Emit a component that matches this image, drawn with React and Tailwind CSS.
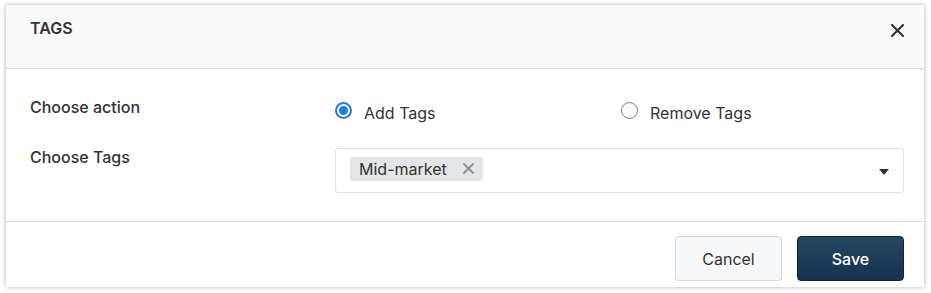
import { useState } from 'react';

function Radio({ checked, label, onClick }) {
     return (
          <button type="button" onClick={onClick} className="flex items-center gap-3 text-left">
               {checked ? (
                    <span className="w-[17px] h-[17px] rounded-full border-2 border-[#1e7bf0] flex items-center justify-center bg-white">
                         <span className="w-[9px] h-[9px] rounded-full bg-[#1e7bf0]"></span>
                    </span>
               ) : (
                    <span className="w-[17px] h-[17px] rounded-full border border-[#7a7a7a] bg-white"></span>
               )}
               <span className="text-[16px] leading-[20px] text-[#333] mt-[6px]">{label}</span>
          </button>
     );
}

export default function App() {
     const [action, setAction] = useState('add');

     return (
          <div className="w-[931px] h-[293px] bg-white pt-[5px] pl-[6px] font-['Inter',sans-serif]">
               <div className="w-[918px] h-[282px] bg-white shadow-[0_0_5px_rgba(0,0,0,0.3)] flex flex-col">
                    {/* header */}
                    <div className="h-[64px] bg-[#fafafa] border-b border-[#d3dbe3] flex items-start justify-between pl-[24px] pr-[19px]">
                         <h2 className="mt-[13px] text-[16px] leading-[20px] font-semibold text-[#333]">TAGS</h2>
                         <button type="button" className="mt-[18px] text-[#333]">
                              <svg width="15" height="15" viewBox="0 0 15 15" fill="none" stroke="currentColor" strokeWidth="2.2" strokeLinecap="round">
                                   <path d="M2 2l11 11M13 2L2 13" />
                              </svg>
                         </button>
                    </div>

                    {/* body */}
                    <div className="flex-1 pl-[24px] pr-[20px] pt-[28px] border-b border-[#d3dbe3]">
                         <div className="flex">
                              <div className="w-[305px] text-[16px] leading-[20px] font-medium text-[#333]">Choose action</div>
                              <div className="flex">
                                   <div className="w-[286px]">
                                        <Radio checked={action === 'add'} label="Add Tags" onClick={() => setAction('add')} />
                                   </div>
                                   <Radio checked={action === 'remove'} label="Remove Tags" onClick={() => setAction('remove')} />
                              </div>
                         </div>
                         <div className="flex mt-[24px]">
                              <div className="w-[305px] text-[16px] leading-[20px] font-medium text-[#333]">Choose Tags</div>
                              <div className="flex-1 h-[45px] mt-[1px] border border-[#dde2e7] rounded-[3px] flex items-center pl-[14px] pr-[14px]">
                                   <span className="h-[24px] mb-[4px] pl-[9px] pr-[9px] bg-[#e3e6e9] rounded-[3px] flex items-center gap-[16px] text-[16px] text-[#333]">
                                        Mid-market
                                        <svg width="11" height="11" viewBox="0 0 11 11" stroke="#8a8d91" strokeWidth="1.8" strokeLinecap="round">
                                             <path d="M1 1l9 9M10 1L1 10" />
                                        </svg>
                                   </span>
                                   <span className="flex-1"></span>
                                   <svg width="10" height="6" viewBox="0 0 10 6" className="mt-[2px]">
                                        <path d="M0 0h10L5 6z" fill="#333" />
                                   </svg>
                              </div>
                         </div>
                    </div>

                    {/* footer */}
                    <div className="h-[65px] flex items-start justify-end gap-[15px] pr-[20px] pt-[14px]">
                         <button type="button" className="w-[107px] h-[45px] rounded-[4px] border border-[#cdd5de] bg-[#f6f8fa] text-[16px] text-[#333]">Cancel</button>
                         <button type="button" className="w-[107px] h-[45px] rounded-[4px] bg-gradient-to-b from-[#24465f] to-[#163250] border border-[#10263b] text-[16px] font-medium text-white">Save</button>
                    </div>
               </div>
          </div>
     );
}
